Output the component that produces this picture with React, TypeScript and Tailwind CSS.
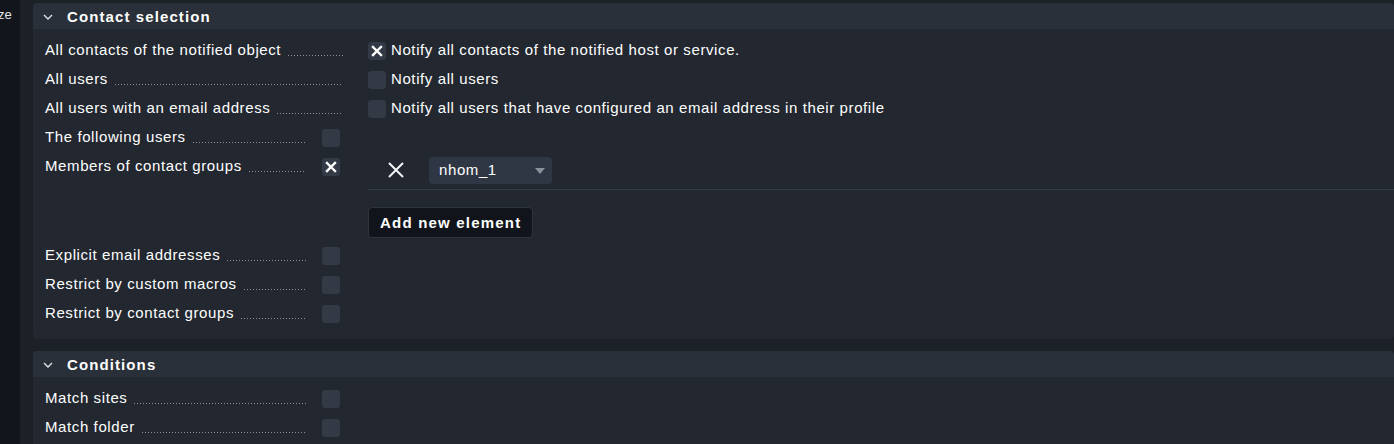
import React from 'react';

const font = { fontFamily: '"Liberation Sans", Arial, sans-serif' };

const Check = ({ checked }: { checked?: boolean }) => (
  <span className="w-[18px] h-[18px] shrink-0 rounded-[3px] bg-[#333a46] flex items-center justify-center">
    {checked && (
      <svg width="12" height="12" viewBox="0 0 12 12">
        <path d="M2 2L10 10M10 2L2 10" stroke="#fff" strokeWidth="2.4" strokeLinecap="square" />
      </svg>
    )}
  </span>
);

const Chevron = () => (
  <svg width="10" height="6" viewBox="0 0 10 6" className="shrink-0">
    <path d="M1 1L5 5L9 1" stroke="#e5e7eb" strokeWidth="1.3" fill="none" />
  </svg>
);

const Label = ({ text, box, checked }: { text: string; box?: boolean; checked?: boolean }) => (
  <div className="w-[298px] shrink-0 flex items-center h-[29px]">
    <span className="whitespace-nowrap">{text}</span>
    <span className="flex-1 ml-[7px] h-[1px] mt-[10px] bg-[linear-gradient(to_right,#8a909b_1px,transparent_1px)] bg-[length:3px_1px] bg-repeat-x" />
    {box && (
      <span className="ml-[16px] mr-[3px]">
        <Check checked={checked} />
      </span>
    )}
  </div>
);

const Header = ({ title }: { title: string }) => (
  <div className="h-[26px] bg-[#29303a] rounded-t-[4px] flex items-center pl-[10px] gap-[14px] pt-[2px]">
    <Chevron />
    <span className="font-bold text-[15px] tracking-[1.1px]">{title}</span>
  </div>
);

export default function App() {
  return (
    <div className="w-[1394px] h-[444px] overflow-hidden flex bg-[#1c2027] text-white text-[15px] tracking-[0.6px]" style={font}>
      <div className="w-[20px] shrink-0 bg-[#12161c] overflow-hidden">
        <div className="text-[13px] tracking-normal -ml-[2px] mt-[5px] text-[#e5e7eb] whitespace-nowrap">ze</div>
      </div>
      <div className="flex-1 pl-[13px] pt-[3px] flex flex-col gap-[12px]">
        <div className="bg-[#222730] rounded-[4px]">
          <Header title="Contact selection" />
          <div className="pl-[12px] pt-[7px] pb-[11px]">
            <div className="flex">
              <Label text="All contacts of the notified object" />
              <div className="ml-[25px] flex items-center gap-[5px]">
                <Check checked />
                <span>Notify all contacts of the notified host or service.</span>
              </div>
            </div>
            <div className="flex">
              <Label text="All users" />
              <div className="ml-[25px] flex items-center gap-[5px]">
                <Check />
                <span>Notify all users</span>
              </div>
            </div>
            <div className="flex">
              <Label text="All users with an email address" />
              <div className="ml-[25px] flex items-center gap-[5px]">
                <Check />
                <span>Notify all users that have configured an email address in their profile</span>
              </div>
            </div>
            <Label text="The following users" box />
            <div className="flex items-start">
              <Label text="Members of contact groups" box checked />
              <div className="ml-[25px] flex-1 flex flex-col pt-[4px]">
                <div className="flex items-center h-[28px] border-b border-[#363c47] box-content pb-[5px]">
                  <svg width="18" height="18" viewBox="0 0 18 18" className="ml-[19px]">
                    <path d="M2 2L16 16M16 2L2 16" stroke="#f3f4f6" strokeWidth="2" />
                  </svg>
                  <div className="ml-[24px] w-[123px] h-[27px] rounded-[4px] bg-[#2f3744] flex items-center pl-[10px] pr-[7px] justify-between">
                    <span>nhom_1</span>
                    <span className="w-0 h-0 border-l-[5px] border-r-[5px] border-t-[6px] border-l-transparent border-r-transparent border-t-[#8b919b] mt-[2px]" />
                  </div>
                </div>
                <div className="mt-[17px] mb-[3px]">
                  <button className="h-[31px] px-[11px] rounded-[4px] bg-[#11151b] border border-[#2e343d] font-bold tracking-[1.2px] text-[15px] pt-[1px]">
                    Add new element
                  </button>
                </div>
              </div>
            </div>
            <Label text="Explicit email addresses" box />
            <Label text="Restrict by custom macros" box />
            <Label text="Restrict by contact groups" box />
          </div>
        </div>
        <div className="bg-[#222730] rounded-t-[4px] flex-1">
          <Header title="Conditions" />
          <div className="pl-[12px] pt-[7px]">
            <Label text="Match sites" box />
            <Label text="Match folder" box />
          </div>
        </div>
      </div>
    </div>
  );
}
